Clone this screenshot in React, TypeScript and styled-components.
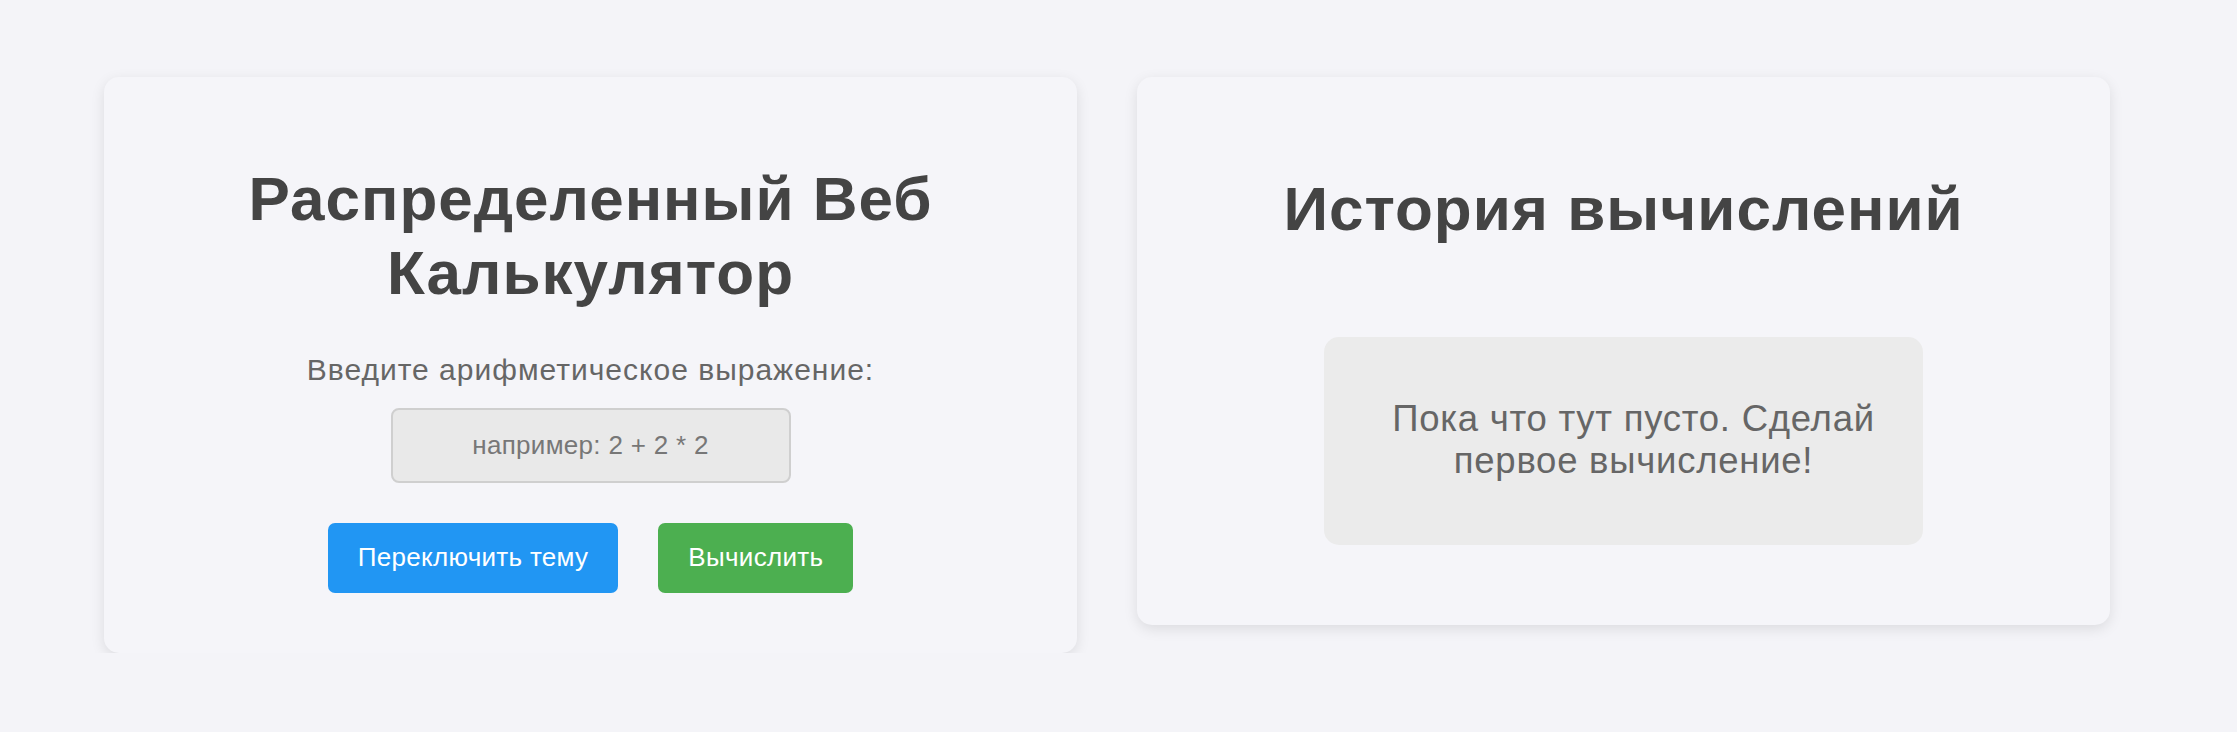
import React from "react";
import styled, { createGlobalStyle } from "styled-components";

const Global = createGlobalStyle`
  html, body {
    margin: 0;
    padding: 0;
    background: #f4f4f8;
    font-family: "Liberation Sans", Arial, sans-serif;
  }
`;

const Page = styled.main`
  display: flex;
  align-items: flex-start;
  gap: 60px;
  padding: 77px 0 0 104px;
`;

const Card = styled.section<{ $top: number; $bottom: number }>`
  width: 973px;
  box-sizing: border-box;
  background: #f5f5f9;
  border-radius: 15px;
  box-shadow: 0 4px 14px rgba(0, 0, 0, 0.1);
  padding: ${(p) => p.$top}px 40px ${(p) => p.$bottom}px;
  display: flex;
  flex-direction: column;
  align-items: center;
  text-align: center;
`;

const Title = styled.h1`
  margin: 0;
  font-size: 62px;
  line-height: 73.8px;
  letter-spacing: 1px;
  font-weight: 700;
  color: #444444;
`;

const Label = styled.label`
  margin-top: 42px;
  font-size: 30px;
  line-height: 36px;
  letter-spacing: 1px;
  color: #666666;
`;

const Input = styled.input`
  margin-top: 20px;
  width: 400px;
  height: 75px;
  box-sizing: border-box;
  border: 2px solid #cfcfcf;
  border-radius: 8px;
  background: #e9e9e9;
  text-align: center;
  font-family: "Liberation Sans", Arial, sans-serif;
  font-size: 26px;
  letter-spacing: 0.3px;
  color: #444;
  outline: none;
  &::placeholder {
    color: #777777;
  }
`;

const ButtonRow = styled.div`
  margin-top: 40px;
  display: flex;
  gap: 40px;
`;

const Button = styled.button<{ $bg: string }>`
  height: 70px;
  padding: 0 30px;
  border: none;
  border-radius: 7px;
  background: ${(p) => p.$bg};
  color: #ffffff;
  font-family: "Liberation Sans", Arial, sans-serif;
  font-size: 26px;
  letter-spacing: 0.3px;
  cursor: pointer;
`;

const HistoryBox = styled.div`
  margin-top: 91px;
  width: 599px;
  height: 208px;
  box-sizing: border-box;
  padding: 61.7px 10px 0 30px;
  background: #ebebeb;
  border-radius: 15px;
  font-size: 36.5px;
  line-height: 42px;
  letter-spacing: 0.75px;
  color: #666666;
`;

export default function App() {
  return (
    <>
      <Global />
      <Page>
        <Card $top={85} $bottom={60}>
          <Title>
            Распределенный Веб
            <br />
            Калькулятор
          </Title>
          <Label htmlFor="expr">Введите арифметическое выражение:</Label>
          <Input id="expr" placeholder="например: 2 + 2 * 2" />
          <ButtonRow>
            <Button $bg="#2196f3">Переключить тему</Button>
            <Button $bg="#4caf50">Вычислить</Button>
          </ButtonRow>
        </Card>
        <Card $top={95} $bottom={80}>
          <Title>История вычислений</Title>
          <HistoryBox>Пока что тут пусто. Сделай первое вычисление!</HistoryBox>
        </Card>
      </Page>
    </>
  );
}
